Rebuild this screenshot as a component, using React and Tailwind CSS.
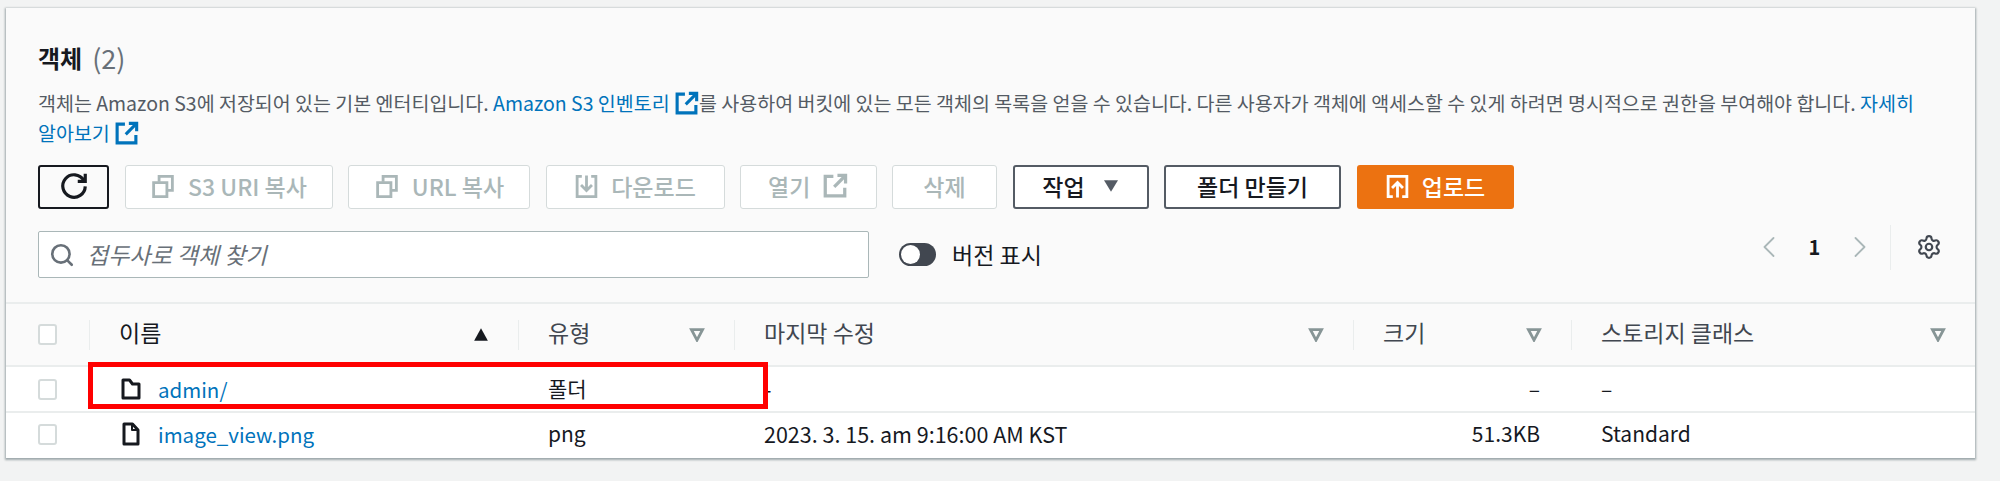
import React from "react";
import { Search, ChevronLeft, ChevronRight, Settings } from "lucide-react";

function ExternalIcon({ className }) {
  return (
    <svg viewBox="0 0 16 16" fill="none" stroke="currentColor" strokeWidth="2" className={className}>
      <path d="M7 2H2v12h12V9" />
      <path d="M9.5 1.5H14.5V6.5" />
      <path d="M14 2L7.5 8.5" />
    </svg>
  );
}

function RefreshIcon() {
  return (
    <svg viewBox="0 0 16 16" fill="none" stroke="#16191f" strokeWidth="1.7" className="h-[30px] w-[30px]">
      <path d="M13.2 5A6 6 0 1 0 14 8.2" />
      <path d="M14 1.5V5.5H10" />
    </svg>
  );
}

function CopyIcon() {
  return (
    <svg viewBox="0 0 16 16" fill="none" stroke="#aab7b8" strokeWidth="1.8" className="h-[25px] w-[26px]">
      <path d="M2 5.5h8.5v9H2z" />
      <path d="M5.5 5V1.5H14v9h-3.5" />
    </svg>
  );
}

function DownloadIcon() {
  return (
    <svg viewBox="0 0 16 16" fill="none" stroke="#aab7b8" strokeWidth="1.8" className="h-[25px] w-[25px]">
      <path d="M5 1.5H2v13h12v-13h-3" />
      <path d="M8 1v9M4.5 7L8 10.5 11.5 7" />
    </svg>
  );
}

function UploadIcon() {
  return (
    <svg viewBox="0 0 16 16" fill="none" stroke="#ffffff" strokeWidth="1.8" className="h-[25px] w-[25px]">
      <path d="M5 14.5H2v-13h12v13h-3" />
      <path d="M8 15V6M4.5 9L8 5.5 11.5 9" />
    </svg>
  );
}

function FolderIcon() {
  return (
    <svg viewBox="0 0 20 24" fill="none" stroke="#16191f" strokeWidth="3" strokeLinejoin="round" className="h-[24px] w-[20px]">
      <path d="M2 3h6.5l3 4H18v14H2z" />
    </svg>
  );
}

function FileIcon() {
  return (
    <svg viewBox="0 0 20 24" fill="none" stroke="#16191f" strokeWidth="3" strokeLinejoin="round" className="h-[24px] w-[20px]">
      <path d="M3 2h8.5L17 8v14H3z" />
      <path d="M11 2v6h6" strokeWidth="2" />
    </svg>
  );
}

function SortDown() {
  return (
    <svg viewBox="0 0 12 12" fill="none" stroke="#879596" strokeWidth="2.2" className="h-[15px] w-[18px]">
      <path d="M1.5 2h9L6 10.5z" />
    </svg>
  );
}

function SortUp() {
  return (
    <svg viewBox="0 0 12 12" fill="#16191f" className="h-[15px] w-[18px]">
      <path d="M6 1l5.5 10H.5z" />
    </svg>
  );
}

function Btn({ children, w, kind = "off" }) {
  const look = {
    off: "border border-[#d5dbdb] bg-white text-[#aab7b8]",
    on: "border-2 border-[#545b64] bg-white text-[#16191f]",
    primary: "bg-[#ec7211] text-white",
    refresh: "border-2 border-[#16191f] bg-[#fafafa] text-[#16191f]",
  }[kind];
  return (
    <div className={`flex h-[44px] items-center justify-center gap-[12px] rounded-[3px] pb-[2px] text-[23px] font-medium ${look} ${w}`}>
      {children}
    </div>
  );
}

function Check() {
  return <div className="h-[21px] w-[19px] rounded-[3px] border-2 border-[#d5dbdb] bg-white" />;
}

export default function App() {
  return (
    <div className="min-h-[481px] bg-[#f2f3f3] pl-[6px] pt-[8px] font-['Noto_Sans_CJK_KR','Open_Sans',sans-serif] text-[#16191f]">
      <div className="relative w-[1969px] bg-[#fafafa] shadow-[0_1px_2px_1px_rgba(0,28,36,0.35)]">
        {/* 제목, 설명 */}
        <div className="pl-[32px] pr-[50px] pt-[36px]">
          <h2 className="flex h-[28px] items-center text-[24px] leading-[28px] font-bold">
            객체
            <span className="ml-[10px] text-[27px] font-normal text-[#687078]">(2)</span>
          </h2>
          <p className="mt-[16px] text-[19.5px] leading-[30px] text-[#545b64]">
            객체는 Amazon S3에 저장되어 있는 기본 엔터티입니다.{" "}
            <span className="text-[#0073bb]">
              Amazon S3 인벤토리 <ExternalIcon className="inline h-[25px] w-[25px] align-[-5px]" />
            </span>
            를 사용하여 버킷에 있는 모든 객체의 목록을 얻을 수 있습니다. 다른 사용자가 객체에 액세스할 수 있게 하려면 명시적으로 권한을 부여해야 합니다.{" "}
            <span className="text-[#0073bb]">
              자세히 알아보기 <ExternalIcon className="inline h-[25px] w-[25px] align-[-5px]" />
            </span>
          </p>

          {/* 버튼 */}
          <div className="mt-[17px] flex gap-[15.5px]">
            <Btn kind="refresh" w="w-[71px]"><RefreshIcon /></Btn>
            <Btn w="w-[208px]"><CopyIcon />S3 URI 복사</Btn>
            <Btn w="w-[182px]"><CopyIcon />URL 복사</Btn>
            <Btn w="w-[179px]"><DownloadIcon />다운로드</Btn>
            <Btn w="w-[136.5px]">열기<ExternalIcon className="h-[26px] w-[26px] text-[#aab7b8]" /></Btn>
            <Btn w="w-[105px]">삭제</Btn>
            <Btn kind="on" w="w-[136px]">
              작업
              <svg viewBox="0 0 12 12" fill="#545b64" className="ml-[6px] h-[14px] w-[16px]"><path d="M0 1h12L6 11z" /></svg>
            </Btn>
            <Btn kind="on" w="w-[177px]">폴더 만들기</Btn>
            <Btn kind="primary" w="w-[157px]"><UploadIcon />업로드</Btn>
          </div>

          {/* 검색 */}
          <div className="mt-[22px] flex h-[47px] items-center">
            <div className="flex h-[47px] w-[831px] items-center gap-[12px] rounded-[2px] border border-[#aab7b8] bg-white pl-[10px]">
              <Search size={26} color="#687078" strokeWidth={2.4} />
              <span className="text-[23px] italic text-[#687078]">접두사로 객체 찾기</span>
            </div>
            <div className="relative ml-[30px] h-[23px] w-[37px] rounded-full bg-[#414750]">
              <div className="absolute left-[2px] top-[2px] h-[19px] w-[19px] rounded-full bg-white" />
            </div>
            <span className="ml-[16px] text-[23px]">버전 표시</span>
            <div className="-mt-[6px] ml-auto flex h-[45px] items-start self-start pt-[4px]">
              <ChevronLeft size={36} color="#aab7b8" strokeWidth={1.2} />
              <span className="w-[55px] text-center text-[20px] leading-[36px] font-bold">1</span>
              <ChevronRight size={36} color="#aab7b8" strokeWidth={1.2} />
              <div className="-mt-[4px] ml-[12px] h-[45px] w-px bg-[#eaeded]" />
              <div className="ml-[25px] mr-[-17px] pt-[5px]">
                <Settings size={26} color="#414750" strokeWidth={2} />
              </div>
            </div>
          </div>
        </div>

        {/* 표 */}
        <div className="mt-[24px] border-t-2 border-[#eaeded]">
          <div className="flex h-[63px] items-center border-b-2 border-[#eaeded] text-[23px]">
            <div className="flex w-[83px] justify-start pl-[32px]"><Check /></div>
            <HeadCell w="w-[429px]" label="이름" icon={<SortUp />} active />
            <HeadCell w="w-[216px]" label="유형" icon={<SortDown />} />
            <HeadCell w="w-[619px]" label="마지막 수정" icon={<SortDown />} />
            <HeadCell w="w-[218px]" label="크기" icon={<SortDown />} />
            <HeadCell w="w-[404px]" label="스토리지 클래스" icon={<SortDown />} />
          </div>
          <Row icon={<FolderIcon />} name="admin/" type="폴더" date="-" size="–" cls="–" />
          <Row icon={<FileIcon />} name="image_view.png" type="png" date="2023. 3. 15. am 9:16:00 AM KST" size="51.3KB" cls="Standard" last />
        </div>

        {/* 강조 표시 */}
        <div className="absolute left-[82px] top-[354px] h-[47px] w-[680px] border-[5px] border-[#ff0000]" />
      </div>
    </div>
  );
}

function HeadCell({ w, label, icon, active }) {
  return (
    <div className={`flex h-[30px] items-center justify-between border-l border-[#eaeded] pl-[29px] pr-[28px] ${w}`}>
      <span className={`pb-[4px] ${active ? "text-[#16191f]" : "text-[#414750]"}`}>{label}</span>
      {icon}
    </div>
  );
}

function Row({ icon, name, type, date, size, cls, last }) {
  return (
    <div className={`flex items-center bg-white text-[21px] ${last ? "h-[45px] pb-[3px]" : "h-[46px] border-b-2 border-[#eaeded]"}`}>
      <div className="flex w-[83px] pl-[32px]"><Check /></div>
      <div className="flex w-[429px] items-center gap-[17px] pl-[32px]">
        {icon}
        <span className="text-[20.5px] text-[#0073bb]">{name}</span>
      </div>
      <div className="w-[216px] pl-[30px]">{type}</div>
      <div className="w-[619px] pl-[30px] text-[21.5px]">{date}</div>
      <div className="w-[187px] text-right">{size}</div>
      <div className="pl-[61px]">{cls}</div>
    </div>
  );
}
